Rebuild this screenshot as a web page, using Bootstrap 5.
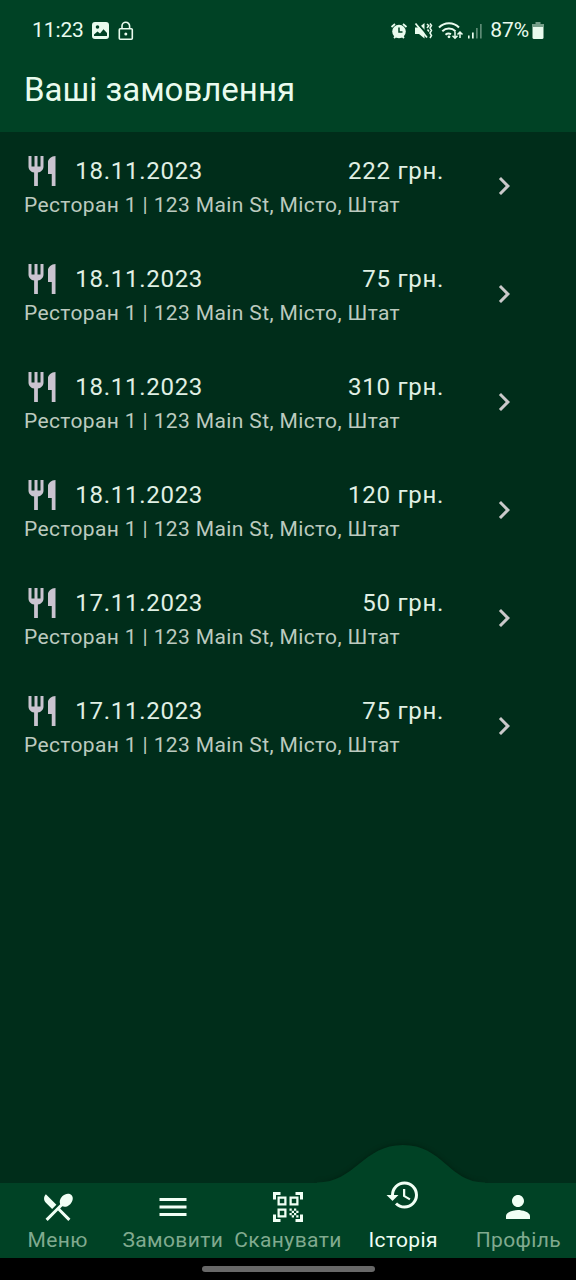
<!DOCTYPE html>
<html lang="uk">
<head>
<meta charset="utf-8">
<meta name="viewport" content="width=device-width, initial-scale=1">
<title>Ваші замовлення</title>
<link href="https://cdn.jsdelivr.net/npm/bootstrap@5.3.0/dist/css/bootstrap.min.css" rel="stylesheet">
<style>
  body { font-family: Roboto, "Noto Sans", sans-serif; background: #002d1a; color: #e0f0e4; height: 1280px; overflow: hidden; }
  svg { display: block; fill: currentColor; flex: none; }
  .top { background: #004225; height: 132px; color: #e9fbee; }
  .status { height: 60px; padding: 1px 32px 0 32px; font-size: 21px; letter-spacing: -.1px; }
  .title { font-size: 33px; line-height: 40px; padding: 10px 24px 0; }
  .order { height: 108px; padding: 21px 54px 0 24px; background: none; border: 0; color: inherit; }
  .order-info { width: 420px; }
  .order-head { height: 36px; font-size: 24px; letter-spacing: .72px; }
  .order-head svg { margin-right: 15.300px; }
  .order-place { font-size: 21px; line-height: 32px; letter-spacing: .375px; color: #bccabf; }
  .muted-icon { color: #cac4d0; }
  .chev { margin-top: 15px; color: #cac9ca; }
  .tabs { height: 75px; background: #004225; }
  .tab { width: 20%; font-size: 21px; line-height: 30px; letter-spacing: .375px; color: #80aa8f; padding-top: 5.500px; white-space: nowrap; }
  .tab svg { color: #f1fff5; margin-bottom: .5px; }
  .tab.active { color: #f1fff5; }
  .tab.active svg { margin-top: -12px; margin-bottom: 12.500px; position: relative; }
  .bump { left: 303px; bottom: 100%; color: #004225; }
  .bump path { filter: drop-shadow(0 -1px 2px rgba(0, 20, 8, .45)); }
  .gesture { height: 22px; background: #000; }
  .pill { width: 173px; height: 6px; background: #686868; }
</style>
</head>
<body class="d-flex flex-column">
<header class="top">
  <div class="status d-flex align-items-center">
    <span>11:23</span>
    <svg class="ms-2" width="17" height="17" viewBox="0 0 17 17"><path fill-rule="evenodd" d="M3 0h11a3 3 0 0 1 3 3v11a3 3 0 0 1-3 3H3a3 3 0 0 1-3-3V3a3 3 0 0 1 3-3zm2.500 3.200a1.800 1.800 0 1 0 0 3.600 1.800 1.800 0 0 0 0-3.600zM2 14h13v-3l-3.500-3.800L8 11.500 5.500 9.500 2 12.500z"/></svg>
    <svg style="margin-left:9px" width="16" height="20" viewBox="0 0 16 20"><g fill="none" stroke="currentColor" stroke-width="1.600"><rect x="1.300" y="7.800" width="13" height="10.400" rx="1"/><path d="M4 7.800V5a3.800 3.800 0 0 1 7.600 0v2.800"/></g><circle cx="7.800" cy="13" r="1.500"/></svg>
    <div class="d-flex align-items-center ms-auto">
      <svg width="100" height="22" viewBox="0 0 100 22">
        <circle cx="9" cy="11.500" r="6.800"/>
        <path d="M1.500 7L5 4M16.500 7L13 4M4 18l2-2M14 18l-2-2" stroke="currentColor" stroke-width="1.800"/>
        <path d="M9 7.500V12h3.500" fill="none" stroke="#004225" stroke-width="1.500"/>
        <path d="M25 7.500h4l5.500-4.500v15.500L29 14h-4z"/>
        <path d="M26.500 2.500l12 13" stroke="#004225" stroke-width="2"/><path d="M25.500 3.500l11.500 14" stroke="currentColor" stroke-width="1.800"/>
        <path d="M37 4l1.800 1.800L37 8M40 3.500l1.500 2-1.500 2.500 1.500 2.500-1.500 2.500 1.500 2.500-1.500 2.500M37.500 9.500l1.500 2" fill="none" stroke="currentColor" stroke-width="1.500"/>
        <g transform="translate(1 -.5)">
          <g fill="none" stroke="currentColor" stroke-width="2"><path d="M48 8a14 14 0 0 1 20 0M51.300 11.700a9.500 9.500 0 0 1 13.200 0M54.500 15.200a5 5 0 0 1 5.500-.6"/></g>
          <circle cx="58" cy="17.300" r="1.400"/>
          <path d="M64 12v6.500M61.500 16.300l2.500 2.500 2.500-2.500M69 18.500v-6M66.500 15l2.500-2.500 2.500 2.500" fill="none" stroke="currentColor" stroke-width="1.500"/>
          <path d="M77 16h1.600v3H77zM81 13h1.700v6H81z"/><path opacity=".4" d="M85 8.500h1.700V19H85zM89 4.500h1.700V19H89z"/>
        </g>
      </svg>
      <span>87%</span>
      <svg style="margin-left:3px" width="12" height="18" viewBox="0 0 12 18"><path opacity=".5" d="M3.500 0h5v2H12v3H0V2h3.500z"/><path d="M.5 5h11v10.500A1.500 1.500 0 0 1 10 17H2a1.500 1.500 0 0 1-1.500-1.500z"/></svg>
    </div>
  </div>
  <h1 class="title fw-normal m-0">Ваші замовлення</h1>
</header>

<main class="flex-grow-1 d-flex flex-column" id="orders"></main>

<nav class="tabs d-flex position-relative">
  <svg class="bump position-absolute" width="200" height="45" viewBox="0 -6 200 45"><path d="M14 39V38.500C52 38.500 60 1 100 1S146 38.500 182 38.500V39z"/></svg>
  <div class="tab d-flex flex-column align-items-center"><svg width="36" height="36" viewBox="0 0 24 24"><path d="M8.100 13.340l2.830-2.830L3.910 3.500c-1.560 1.560-1.560 4.090 0 5.660l4.190 4.180zm6.780-1.810c1.530.71 3.680.21 5.270-1.380 1.910-1.910 2.280-4.650.81-6.120-1.460-1.460-4.200-1.100-6.120.81-1.590 1.590-2.090 3.740-1.380 5.270L3.700 19.870l1.410 1.410L12 14.410l6.880 6.880 1.410-1.410L13.410 13l1.470-1.470z"/></svg>Меню</div>
  <div class="tab d-flex flex-column align-items-center"><svg width="36" height="36" viewBox="0 0 24 24"><path d="M3 18h18v-2H3v2zm0-5h18v-2H3v2zm0-7v2h18V6H3z"/></svg>Замовити</div>
  <div class="tab d-flex flex-column align-items-center"><svg width="36" height="36" viewBox="0 0 24 24"><path d="M9.500 6.500v3h-3v-3h3M11 5H5v6h6V5zm-1.500 9.500v3h-3v-3h3M11 13H5v6h6v-6zm6.500-6.500v3h-3v-3h3M19 5h-6v6h6V5zm-6 8h1.500v1.500H13V13zm1.500 1.500H16V16h-1.500v-1.500zM16 13h1.500v1.500H16V13zm-3 3h1.500v1.500H13V16zm1.500 1.500H16V19h-1.500v-1.500zM16 16h1.500v1.500H16V16zm1.500-1.500H19V16h-1.500v-1.500zm0 3H19V19h-1.500v-1.500zM22 7h-2V4h-3V2h5v5zm0 15v-5h-2v3h-3v2h5zM2 22h5v-2H4v-3H2v5zM2 2v5h2V4h3V2H2z"/></svg>Сканувати</div>
  <div class="tab active d-flex flex-column align-items-center"><svg width="36" height="36" viewBox="0 0 24 24"><path d="M13 3a9 9 0 0 0-9 9H1l3.890 3.890.07.14L9 12H6c0-3.870 3.130-7 7-7s7 3.130 7 7-3.130 7-7 7c-1.930 0-3.680-.79-4.940-2.060l-1.420 1.420A8.954 8.954 0 0 0 13 21a9 9 0 0 0 0-18zm-1 5v5l4.280 2.540.72-1.210-3.500-2.080V8H12z"/></svg>Історія</div>
  <div class="tab d-flex flex-column align-items-center"><svg width="36" height="36" viewBox="0 0 24 24"><path d="M12 12c2.210 0 4-1.790 4-4s-1.790-4-4-4-4 1.790-4 4 1.790 4 4 4zm0 2c-2.670 0-8 1.340-8 4v2h16v-2c0-2.660-5.330-4-8-4z"/></svg>Профіль</div>
</nav>
<div class="gesture d-flex justify-content-center align-items-center"><div class="pill rounded-pill"></div></div>

<script src="https://cdn.jsdelivr.net/npm/bootstrap@5.3.0/dist/js/bootstrap.bundle.min.js"></script>
<script>
  const orders = [["18.11.2023", 222], ["18.11.2023", 75], ["18.11.2023", 310], ["18.11.2023", 120], ["17.11.2023", 50], ["17.11.2023", 75]];
  document.getElementById("orders").innerHTML = orders.map(([date, sum]) => `
    <button type="button" class="order d-flex justify-content-between align-items-start text-start">
      <div class="order-info">
        <div class="order-head d-flex align-items-center">
          <svg class="muted-icon" width="36" height="36" viewBox="0 0 24 24"><path d="M11 9H9V2H7v7H5V2H3v7c0 2.120 1.660 3.840 3.750 3.970V22h2.500v-9.030C11.340 12.840 13 11.120 13 9V2h-2v7zm5-3v8h2.500v8H21V2c-2.760 0-5 2.240-5 4z"/></svg>
          <span>${date}</span><span class="ms-auto">${sum} грн.</span>
        </div>
        <div class="order-place">Ресторан 1 | 123 Main St, Місто, Штат</div>
      </div>
      <svg class="chev" width="36" height="36" viewBox="0 0 24 24"><path d="M10 6L8.590 7.410 13.170 12l-4.580 4.590L10 18l6-6z"/></svg>
    </button>`).join("");
</script>
</body>
</html>
